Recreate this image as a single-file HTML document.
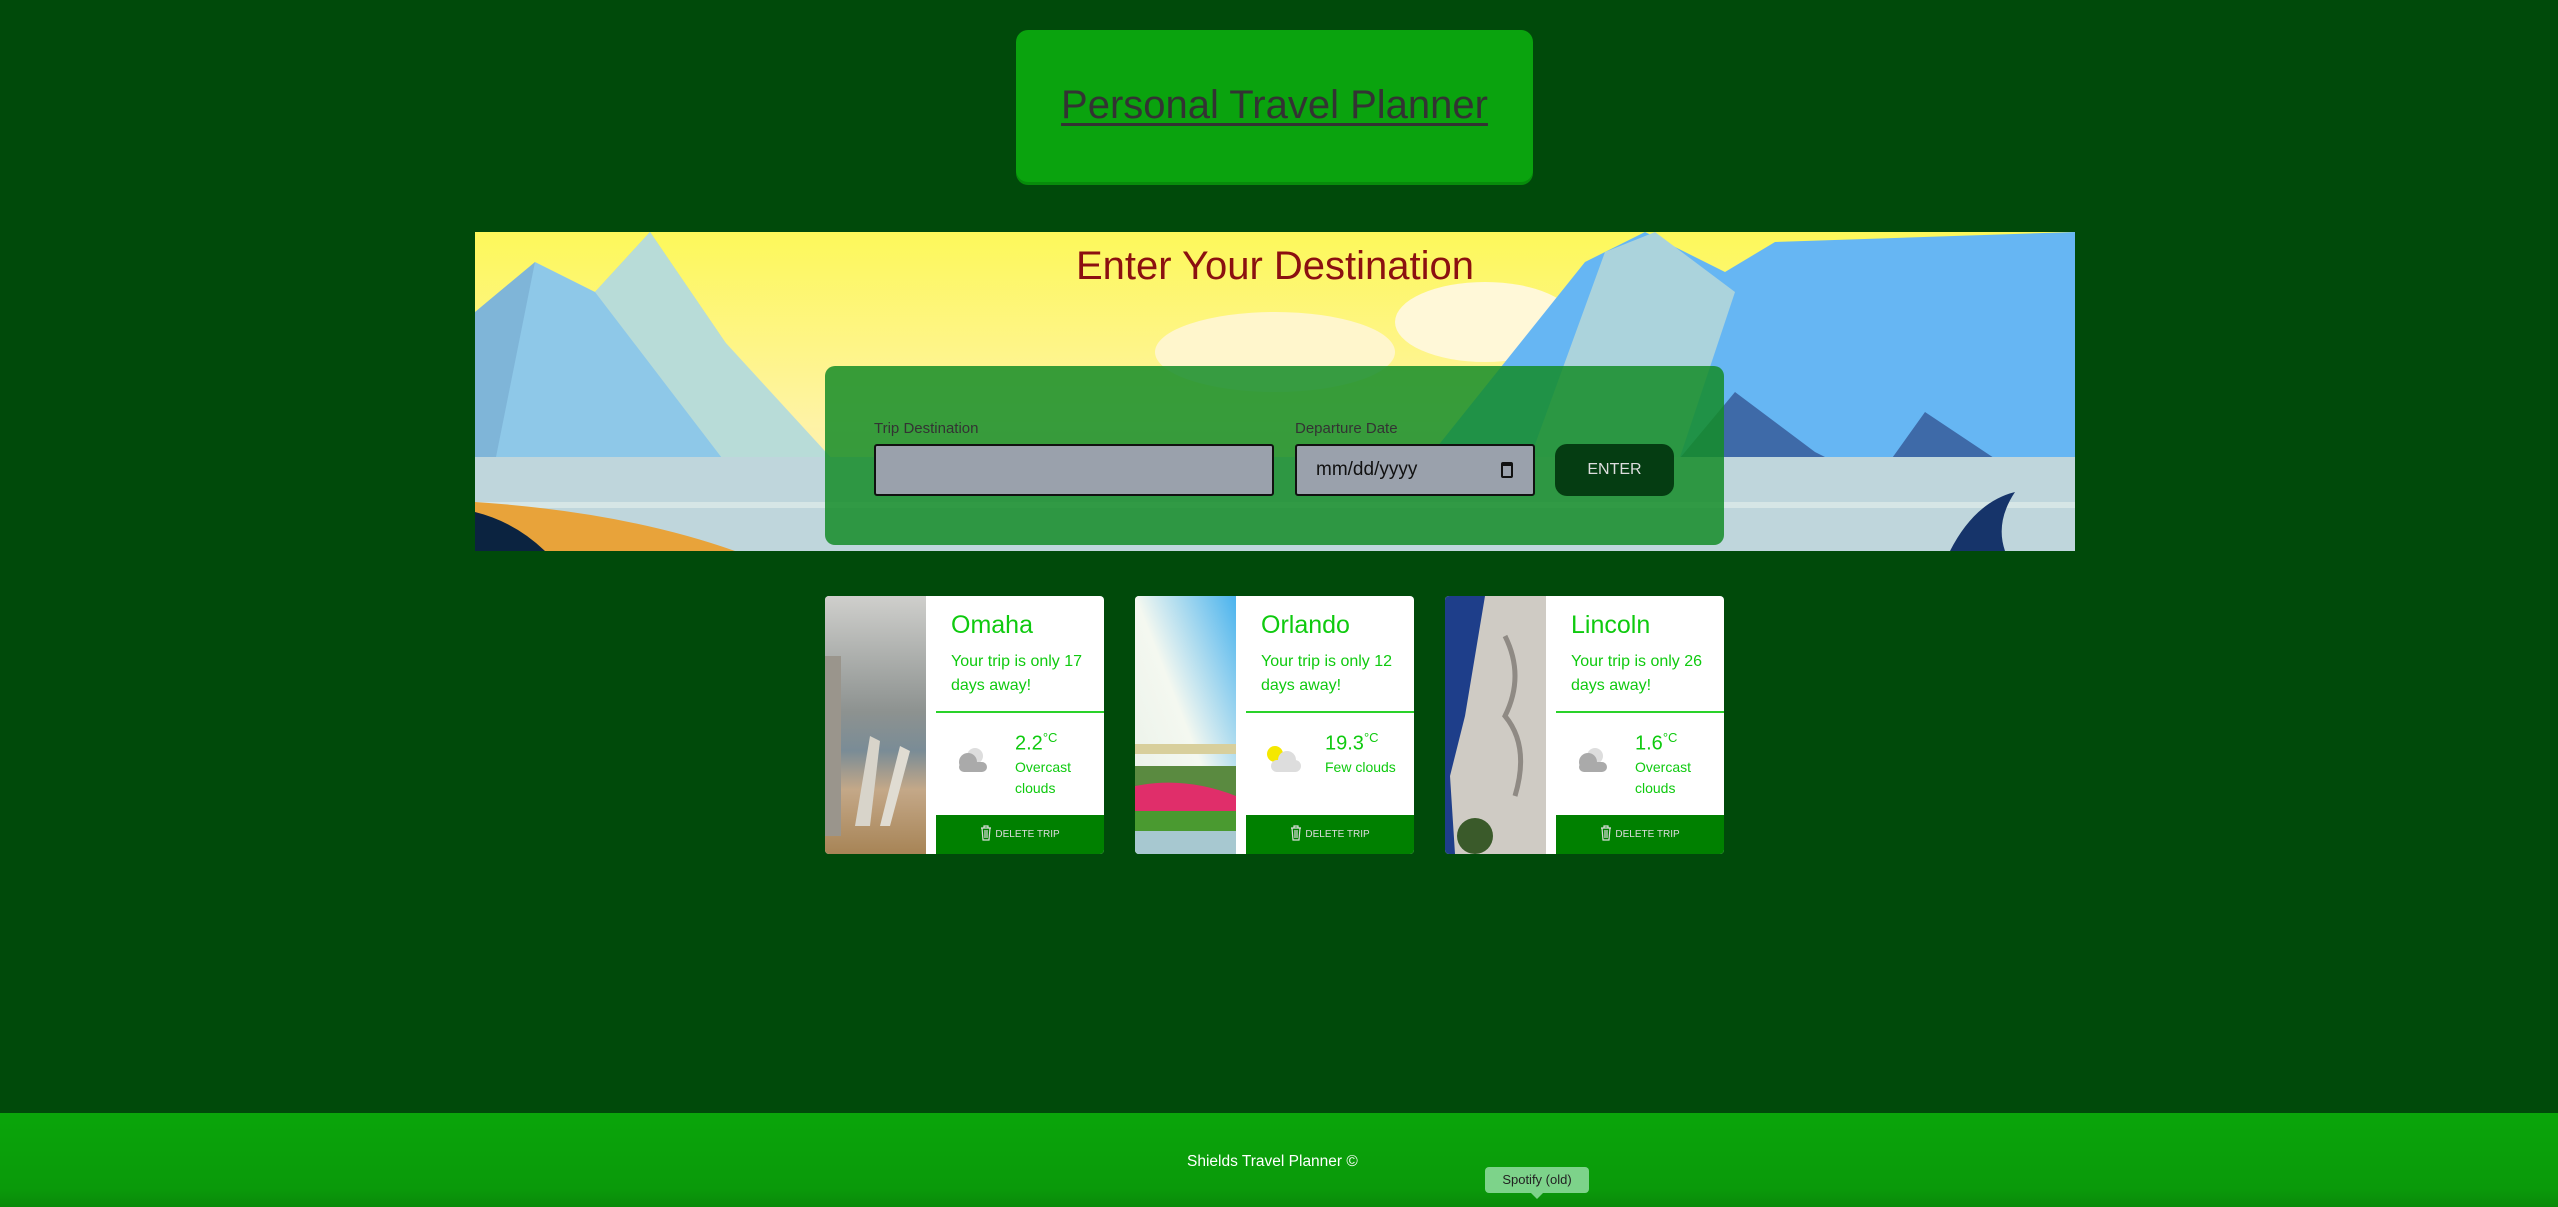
<!DOCTYPE html>
<html><head><meta charset="utf-8"><style>
*{margin:0;padding:0;box-sizing:border-box}
body{width:2558px;height:1207px;background:#004a0a;font-family:"Liberation Sans",Arial,sans-serif;position:relative;overflow:hidden}
.hdr{position:absolute;left:1016px;top:30px;width:517px;height:152px;background:#0aa30e;border-radius:12px;box-shadow:0 3px 0 #078c0b;text-align:center}
.hdr a{display:inline-block;margin-top:53px;font-size:40px;color:#333;text-decoration:underline;text-decoration-thickness:3px;text-underline-offset:5px}
.banner{position:absolute;left:475px;top:232px;width:1600px;height:319px;overflow:hidden}
.title{position:absolute;left:0;width:1600px;top:12px;text-align:center;color:#8b1010;font-size:40px}
.panel{position:absolute;left:825px;top:366px;width:899px;height:179px;background:rgba(20,140,40,.85);border-radius:10px}
.lbl{position:absolute;top:54px;font-size:15px;color:#333}
.inp{position:absolute;top:78px;height:52px;background:#9aa1ac;border:2px solid #111;border-radius:3px}
.btn{position:absolute;left:730px;top:78px;width:119px;height:52px;background:#053d12;border-radius:12px;color:#ddd;font-size:16px;text-align:center;line-height:52px}
.card{position:absolute;top:596px;width:279px;height:258px;background:#fff;border-radius:4px;overflow:hidden}
.img{position:absolute;left:0;top:0;width:101px;height:258px}
.ct{position:absolute;left:126px;top:15px;font-size:25px;color:#0fca0f}
.cs{position:absolute;left:126px;top:54px;width:150px;font-size:16px;line-height:24px;color:#0fca0f}
.hr{position:absolute;left:111px;right:0;top:115px;height:2px;background:#2ad22a}
.tmp{position:absolute;left:190px;top:134px;font-size:20px;color:#0fca0f}
.tmp sup{font-size:13px}
.desc{position:absolute;left:190px;top:161px;font-size:14px;line-height:21px;color:#0fca0f;width:80px}
.del{position:absolute;left:111px;right:0;top:219px;height:39px;background:#008000;color:#ddd;font-size:10px;text-align:center;line-height:39px}
.del svg{vertical-align:-4px;margin-right:3px}
.foot{position:absolute;left:0;top:1113px;width:2558px;height:94px;background:linear-gradient(#0aa50a,#0a9a0a 80%,#098a09)}
.ft{position:absolute;left:1187px;top:1153px;font-size:15.5px;color:#fff}
.tip{position:absolute;left:1485px;top:1167px;width:104px;height:26px;background:#7dd38a;border-radius:4px;font-size:13px;color:#222;text-align:center;line-height:26px}
.tip:after{content:"";position:absolute;left:46px;bottom:-6px;border:6px solid transparent;border-bottom:0;border-top-color:#7dd38a}
</style></head><body>
<div class="hdr"><a>Personal Travel Planner</a></div>
<div class="banner">
<svg width="1600" height="319" viewBox="0 0 1600 319">
<defs><linearGradient id="sky" x1="0" y1="0" x2="0" y2="1"><stop offset="0" stop-color="#fdf85a"/><stop offset=".6" stop-color="#fef3a5"/><stop offset="1" stop-color="#fde9c0"/></linearGradient></defs>
<rect width="1600" height="319" fill="url(#sky)"/>
<ellipse cx="800" cy="120" rx="120" ry="40" fill="#fff6cc"/>
<ellipse cx="1010" cy="90" rx="90" ry="40" fill="#fff8d8"/>
<polygon points="0,170 60,30 120,60 175,0 250,110 330,230 0,230" fill="#8ec8e8"/>
<polygon points="0,230 0,80 60,30 20,230" fill="#7fb5d8"/>
<polygon points="120,60 175,0 250,110 360,230 250,230" fill="#b8dcd8"/>
<polygon points="950,230 1110,30 1170,0 1250,40 1300,10 1600,0 1600,280 950,280" fill="#66b6f3"/>
<polygon points="1050,240 1130,20 1180,0 1260,60 1200,240" fill="#abd3dc"/>
<polygon points="1160,280 1260,160 1340,220 1400,250 1450,180 1600,280" fill="#3e6aa8"/>
<rect x="0" y="225" width="1600" height="94" fill="#bfd6dc"/>
<rect x="0" y="270" width="1600" height="6" fill="#d6e6e6"/>
<path d="M0,270 Q150,280 260,319 L0,319Z" fill="#e8a33a"/>
<path d="M0,280 Q40,290 70,319 L0,319Z" fill="#0b2340"/>
<path d="M1475,319 Q1500,270 1540,260 Q1520,290 1530,319Z" fill="#16346a"/>
</svg>
<div class="title">Enter Your Destination</div>
</div>
<div class="panel">
<div class="lbl" style="left:49px">Trip Destination</div>
<div class="lbl" style="left:470px">Departure Date</div>
<div class="inp" style="left:49px;width:400px"></div>
<div class="inp" style="left:470px;width:240px;font-size:19px;line-height:48px;padding-left:19px;color:#111">mm/dd/yyyy<span style="position:absolute;right:20px;top:16px;width:12px;height:16px;border:2px solid #111;border-top-width:4px;border-radius:2px"></span></div>
<div class="btn">ENTER</div>
</div>

<div class="card" style="left:825px">
<svg class="img" viewBox="0 0 101 258" preserveAspectRatio="none"><defs><linearGradient id="a" x1="0" y1="0" x2="0" y2="1"><stop offset="0" stop-color="#cfcfcc"/><stop offset=".45" stop-color="#8d9290"/><stop offset=".6" stop-color="#7a8c96"/><stop offset=".75" stop-color="#c4a888"/><stop offset="1" stop-color="#a78456"/></linearGradient></defs><rect width="101" height="258" fill="url(#a)"/><rect x="0" y="60" width="16" height="180" fill="#9a958c"/><polygon points="30,230 45,140 55,145 45,230" fill="#d8d4ca"/><polygon points="55,230 75,150 85,155 65,230" fill="#e0dcd2"/></svg>
<div class="ct">Omaha</div><div class="cs">Your trip is only 17 days away!</div><div class="hr"></div>
<svg style="position:absolute;left:130px;top:148px" width="36" height="30"><circle cx="20" cy="12" r="8" fill="#ddd"/><circle cx="13" cy="18" r="9" fill="#aaa"/><rect x="4" y="18" width="28" height="10" rx="5" fill="#aaa"/></svg>
<div class="tmp">2.2<sup>°C</sup></div><div class="desc">Overcast clouds</div>
<div class="del"><svg width="12" height="16" viewBox="0 0 12 16" fill="none" stroke="#ddd" stroke-width="1.2"><path d="M1 3h10M4 3V1h4v2M2 3l1 12h6l1-12M5 5v8M7 5v8"/></svg>DELETE TRIP</div></div>

<div class="card" style="left:1135px">
<svg class="img" viewBox="0 0 101 258" preserveAspectRatio="none"><defs><linearGradient id="b" x1="1" y1="0" x2="0" y2="1"><stop offset="0" stop-color="#4ab3ee"/><stop offset=".5" stop-color="#f4f8f0"/><stop offset="1" stop-color="#e8f0e8"/></linearGradient></defs><rect width="101" height="258" fill="url(#b)"/><rect x="0" y="148" width="101" height="10" fill="#d8cf9c"/><rect x="0" y="170" width="101" height="30" fill="#5a8a40"/><path d="M0,190 Q50,180 101,200 L101,225 L0,225Z" fill="#e02e6a"/><rect x="0" y="215" width="101" height="20" fill="#4a9a30"/><rect x="0" y="235" width="101" height="23" fill="#a7c8d0"/></svg>
<div class="ct">Orlando</div><div class="cs">Your trip is only 12 days away!</div><div class="hr"></div>
<svg style="position:absolute;left:130px;top:148px" width="40" height="30"><circle cx="10" cy="10" r="8" fill="#f5e800"/><circle cx="22" cy="16" r="9" fill="#ddd"/><rect x="6" y="16" width="30" height="12" rx="6" fill="#ddd"/></svg>
<div class="tmp">19.3<sup>°C</sup></div><div class="desc" style="width:90px">Few clouds</div>
<div class="del"><svg width="12" height="16" viewBox="0 0 12 16" fill="none" stroke="#ddd" stroke-width="1.2"><path d="M1 3h10M4 3V1h4v2M2 3l1 12h6l1-12M5 5v8M7 5v8"/></svg>DELETE TRIP</div></div>

<div class="card" style="left:1445px">
<svg class="img" viewBox="0 0 101 258" preserveAspectRatio="none"><rect width="101" height="258" fill="#1e3e8a"/><path d="M40,0 L101,0 L101,258 L10,258 L5,180 L20,120 L30,60Z" fill="#cfcbc4"/><path d="M60,40 Q80,80 60,120 Q85,150 70,200" stroke="#8f8a84" stroke-width="5" fill="none"/><circle cx="30" cy="240" r="18" fill="#3a5a2a"/></svg>
<div class="ct">Lincoln</div><div class="cs">Your trip is only 26 days away!</div><div class="hr"></div>
<svg style="position:absolute;left:130px;top:148px" width="36" height="30"><circle cx="20" cy="12" r="8" fill="#ddd"/><circle cx="13" cy="18" r="9" fill="#aaa"/><rect x="4" y="18" width="28" height="10" rx="5" fill="#aaa"/></svg>
<div class="tmp">1.6<sup>°C</sup></div><div class="desc">Overcast clouds</div>
<div class="del"><svg width="12" height="16" viewBox="0 0 12 16" fill="none" stroke="#ddd" stroke-width="1.2"><path d="M1 3h10M4 3V1h4v2M2 3l1 12h6l1-12M5 5v8M7 5v8"/></svg>DELETE TRIP</div></div>

<div class="foot"></div>
<div class="ft">Shields Travel Planner ©</div>
<div class="tip">Spotify (old)</div>
</body></html>
